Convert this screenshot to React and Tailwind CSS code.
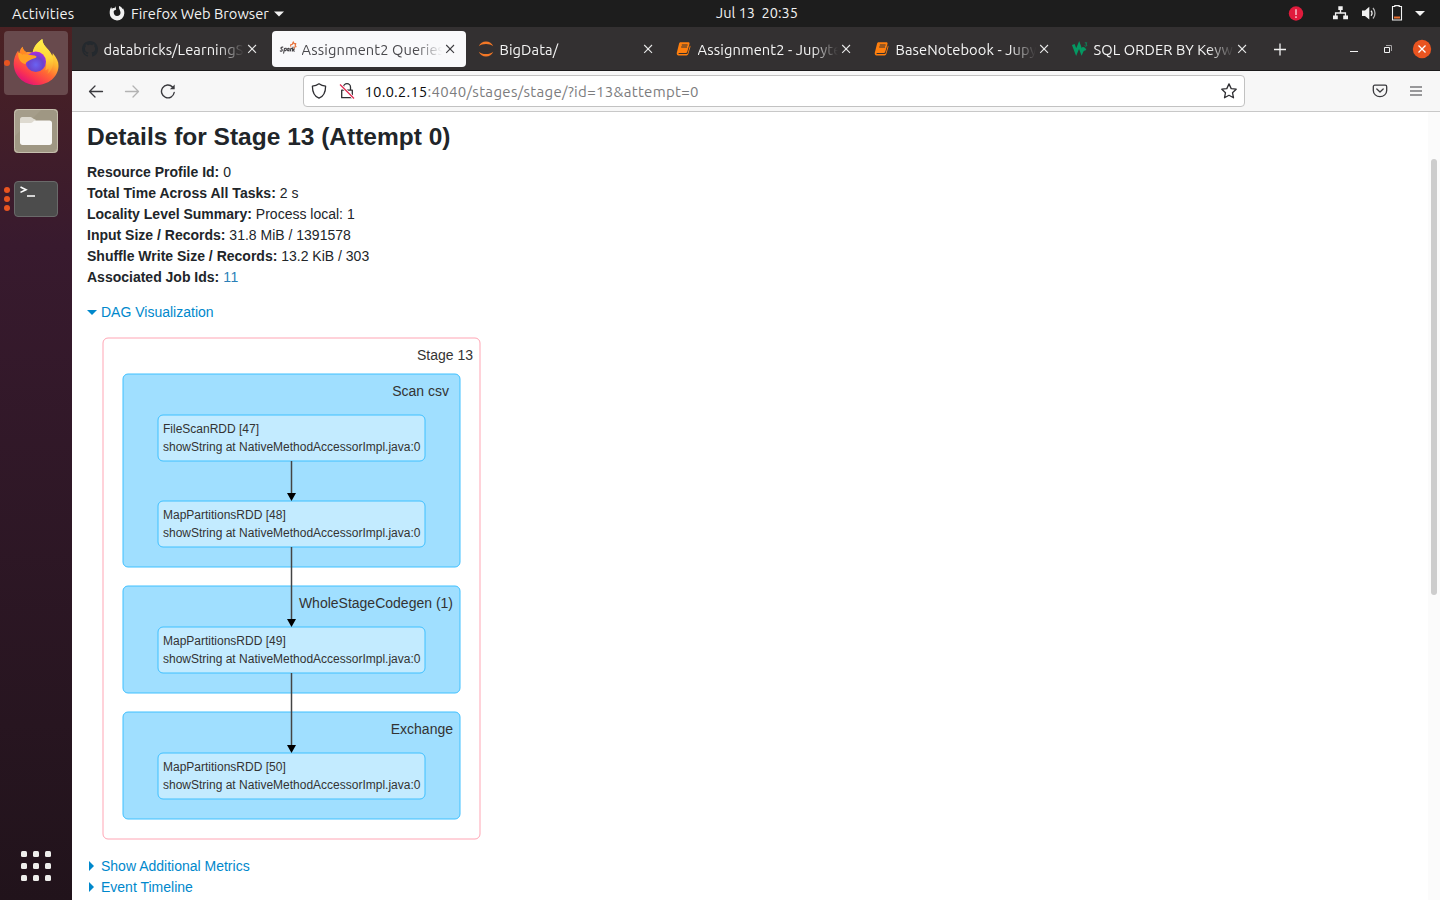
import React from "react";

const UI = "font-['Ubuntu','Noto_Sans',sans-serif]";

function GithubIcon() {
  return (
    <svg width="16" height="16" viewBox="0 0 16 16" fill="#24292e">
      <path d="M8 0C3.58 0 0 3.58 0 8c0 3.54 2.29 6.53 5.47 7.59.4.07.55-.17.55-.38 0-.19-.01-.82-.01-1.49-2.01.37-2.53-.49-2.69-.94-.09-.23-.48-.94-.82-1.13-.28-.15-.68-.52-.01-.53.63-.01 1.08.58 1.23.82.72 1.21 1.87.87 2.33.66.07-.52.28-.87.51-1.07-1.78-.2-3.64-.89-3.64-3.95 0-.87.31-1.59.82-2.15-.08-.2-.36-1.02.08-2.12 0 0 .67-.21 2.2.82.64-.18 1.32-.27 2-.27s1.36.09 2 .27c1.53-1.04 2.2-.82 2.2-.82.44 1.1.16 1.92.08 2.12.51.56.82 1.27.82 2.15 0 3.07-1.87 3.75-3.65 3.95.29.25.54.73.54 1.48 0 1.07-.01 1.93-.01 2.2 0 .21.15.46.55.38A8.01 8.01 0 0 0 16 8c0-4.42-3.58-8-8-8z" />
    </svg>
  );
}

function SparkIcon() {
  return (
    <svg width="16" height="16" viewBox="0 0 16 16" className="overflow-visible">
      <g fill="none" stroke="#454347" strokeWidth="1.200" strokeLinecap="round" transform="translate(.3 -.4) scale(.9 1)">
        <path d="M2.800 6.600C1.300 6.300.4 7 .8 7.800c.4.700 1.600.9 1.400 1.900C2 10.600.8 10.800 0 10.300" />
        <path d="M3.700 12.500 4.600 8c1.500-.8 2.500-.2 2.100 1-.3 1-1.300 1.400-2.300 1" />
        <path d="M9.900 8c-1.500-.5-2.300.3-2.300 1.300 0 1.200 1.500 1 1.900.2L9.900 8l-.3 2.300" />
        <path d="m11.200 10.400.5-2.600M11.600 8.600c.4-.6.900-.8 1.400-.7M13.300 10.500l.8-4M15.700 8.300l-1.700 1 1.500 1.300" />
      </g>
      <path d="m10.600 5.600.2-2.100 1.500-.2 1-2.400.8 1.800 1.700-.2-.6 1.700.8 1.500-1.600.3-.1 1.500" fill="none" stroke="#e8743f" strokeWidth="1.200" strokeLinejoin="round" />
    </svg>
  );
}

function JupyterIcon() {
  return (
    <svg width="16" height="16" viewBox="0 0 16 16" fill="#f37726">
      <path d="M.8 5.300C2 2.300 4.700.6 8 .6s6 1.700 7.200 4.700C13.400 3.800 10.900 3 8 3S2.600 3.800.8 5.300z" />
      <path d="M.8 10.700C2 13.700 4.700 15.400 8 15.400s6-1.700 7.200-4.700C13.400 12.200 10.900 13 8 13s-5.400-.8-7.200-2.300z" />
    </svg>
  );
}

function NotebookIcon() {
  return (
    <svg width="16" height="16" viewBox="0 0 16 16">
      <path d="M4.700 1.700h7.600c1 0 1.500.7 1.200 1.700l-2.300 8.200c-.2.700-.7 1-1.400 1H3c-.7 0-.9.900 0 .9h7.600c.6 0 .9-.2 1.100-.8l2.200-7.800c.5.300.7.800.5 1.500l-2.100 7.200c-.3.900-.9 1.300-1.700 1.300H2.500C1.200 14.900.4 13.600.8 12.300L3.100 3c.3-.9.8-1.300 1.600-1.300z" fill="#ff7f0e" transform="translate(0 -.5)" />
      <path d="M5.800 4h5.800M5.200 6H11" stroke="#333031" strokeWidth="1" />
    </svg>
  );
}

function W3Icon() {
  return (
    <svg width="16" height="16" viewBox="0 0 16 16" fill="none" stroke="#059862">
      <path d="M1.300 3.500 4.200 11l2.900-7L9.700 11l1.600-3.500c.8 0 1.300.8 1.700 2" strokeWidth="2.900" />
      <path d="M12.800 1.800h2l-1 1.400c1.200 0 1.500 1.900 0 2-.6 0-.9-.3-1.100-.6" strokeWidth=".8" />
    </svg>
  );
}

function CloseX({ color }) {
  return (
    <svg width="16" height="16" viewBox="0 0 16 16" className="shrink-0" fill="none" stroke={color} strokeWidth="1.100">
      <path d="m4.200 4 7.800 7.800M12 4l-7.800 7.800" />
    </svg>
  );
}

const tabs = [
  { title: "databricks/LearningSparkV2", Icon: GithubIcon },
  { title: "Assignment2 Queries - Details", Icon: SparkIcon, active: true },
  { title: "BigData/", Icon: JupyterIcon },
  { title: "Assignment2 - Jupyter Notebook", Icon: NotebookIcon },
  { title: "BaseNotebook - Jupyter", Icon: NotebookIcon },
  { title: "SQL ORDER BY Keyword", Icon: W3Icon },
];

function Tab({ title, Icon, active }) {
  return (
    <div className="flex w-[198px] shrink-0 px-0.5 pt-1 pb-[3px]">
      <div className={`flex w-full items-center rounded px-2 ${active ? "bg-[#f9f9fb] text-[#4a494d]" : "text-[#f5f5f5]"}`}>
        <span className="mr-[5.500px] size-4 shrink-0"><Icon /></span>
        <span className="min-w-0 flex-1 overflow-hidden pt-px text-[14.667px] leading-5 tracking-[0.1px] whitespace-nowrap [mask-image:linear-gradient(to_left,transparent,black_26px)]">{title}</span>
        <CloseX color={active ? "#3c3b3f" : "#e8e8e8"} />
      </div>
    </div>
  );
}

function TopBar() {
  return (
    <header className="grid h-[27px] shrink-0 grid-cols-[1fr_auto_1fr] items-center bg-[#1d1d1d] text-[14.667px] text-[#f2f2f2]">
      <div className="flex items-center pl-3">
        <span className="w-[97px] tracking-[0.23px]">Activities</span>
        <svg width="16" height="16" viewBox="0 0 16 16" className="mr-1.5 mb-px shrink-0">
          <path d="M8 15.500A7.300 7.300 0 0 1 .7 8.200C.6 5.500 1.300 3.300 2.200 2l.6 1.700c.9-.7 1.900-.7 2.600-.5L6.400 1.200l.6 2.500c.5 1-.4 1.300-1.200 1.500-.9.400-1.200 1-1.100 2C4.800 9.400 6.100 11 8 11c2.200 0 3.600-1.500 3.500-3.500C11.400 5 9.600 4.400 10 1c2 .6 3 1.800 3.500 3l.7-.5c1 2 1.200 3.300 1.100 5A7.300 7.300 0 0 1 8 15.500z" fill="#f2f2f2" />
        </svg>
        <span className="w-[143px] shrink-0 whitespace-nowrap">Firefox Web Browser</span>
        <svg width="10" height="6" viewBox="0 0 10 6"><path d="M0 .5h10L5 5.500z" fill="#f2f2f2" /></svg>
      </div>
      <div className="pl-[74px] text-[14.500px] leading-[18px] whitespace-pre pb-px">Jul 13  20:35</div>
      <div className="flex items-center justify-end pr-[15px]">
        <svg width="16" height="16" viewBox="0 0 16 16" className="mr-[29px]">
          <circle cx="8" cy="7.500" r="7.200" fill="#e01b3c" />
          <path d="M8 3.200V9M8 10.300V12" stroke="#f6c3cb" strokeWidth="1.500" />
        </svg>
        <svg width="16" height="16" viewBox="0 0 16 16" className="mr-3" fill="#f2f2f2">
          <path d="M5.300.3h4.400v3.800H8.200v2.200h4.900v3.200h1.900v3.800h-4.800V9.500h1.600V7.700H3.200v1.800h1.600v3.800H0V9.500h1.900V6.300h4.900V4.100H5.300z" />
        </svg>
        <svg width="16" height="16" viewBox="0 0 16 16" className="mr-3">
          <path d="M1 4.500h3L8.300.8v12.700L4 10H1z" fill="#f2f2f2" />
          <path d="M10 4.700a3.500 3.500 0 0 1 0 5" fill="none" stroke="#f2f2f2" strokeWidth="1.300" />
          <path d="M12 2a8 8 0 0 1 0 10.500" fill="none" stroke="#b5b5b5" strokeWidth="1.300" />
        </svg>
        <svg width="16" height="16" viewBox="0 0 16 16" className="mr-[10px] overflow-visible">
          <path d="M3.500.5h2.300v-.9h4.400v.9h2.300v13.500h-9z" fill="none" stroke="#f2f2f2" strokeWidth="1.100" />
          <path d="M5 10.500h6v2H5z" fill="#e96f2e" />
        </svg>
        <svg width="10" height="6" viewBox="0 0 10 6"><path d="M0 0h10L5 5z" fill="#f2f2f2" /></svg>
      </div>
    </header>
  );
}

function FirefoxLogo() {
  return (
    <svg width="48" height="48" viewBox="0 0 48 48">
      <defs>
        <linearGradient id="body" x1=".85" y1=".15" x2=".3" y2="1">
          <stop offset="0" stopColor="#fff04a" />
          <stop offset=".3" stopColor="#ffb62f" />
          <stop offset=".55" stopColor="#ff6a33" />
          <stop offset=".8" stopColor="#fb3550" />
          <stop offset="1" stopColor="#e0117a" />
        </linearGradient>
        <radialGradient id="globe" cx=".5" cy=".65" r=".65">
          <stop offset="0" stopColor="#6a63f2" />
          <stop offset=".55" stopColor="#6b44cc" />
          <stop offset="1" stopColor="#b02be0" />
        </radialGradient>
        <linearGradient id="flame" x1=".5" y1="0" x2=".5" y2="1">
          <stop offset="0" stopColor="#fff04a" />
          <stop offset=".55" stopColor="#ffd53a" />
          <stop offset="1" stopColor="#ff8f2e" />
        </linearGradient>
      </defs>
      <path d="M24 46C11.500 46 1.700 36.500 1.700 24.500c0-5 1.800-9.500 4.500-13 .1 1.300.5 2.300 1 3.200.3-2.700 1.500-5.500 3.500-7 .2 2.500 1.500 4.500 3.500 5.500 2-.5 4.500-.3 6.500.5 1-5.500 4-10 9.600-13.700.2 4 2 6.500 4.500 9.500 2 2 4 4.500 5 7.500 1-.8 1-1.500.9-3 4 5 6 8.500 5.800 13C46.300 38 36.500 46 24 46z" fill="url(#body)" />
      <path d="M20.700 13.200c1-5.200 4-9.500 9.600-13.200.2 4 2 6.500 4.500 9 4.500 4.500 7 9 6.500 15-.4 4.500-2.500 8.500-6 11 1.500-2.500 1.500-4 1-5.500-1 1-2 1.500-3 1.800 2-5 .8-11-3.300-14.500-2.500-2.200-5.500-3-9.300-3.600z" fill="url(#flame)" />
      <circle cx="23.800" cy="22.700" r="10.200" fill="url(#globe)" />
      <path d="M6.200 13.500c4 1.700 8 1.900 12.500 2.500 3 .3 5.700.7 6 2-1.500 1.700-4 1.700-6 2.700-2.300 1.300-4.500 1.800-5.200 4.300C9.500 25 5.500 20 6.200 13.500z" fill="#ffa024" />
      <path d="M10.700 7.700c.2 2.500 1.500 4.500 4 5.600-1.500 1-3 1.700-4.500 2.700-1.500-2.500-1.200-6 .5-8.300z" fill="#ff8a22" />
    </svg>
  );
}

function Dock() {
  return (
    <aside className="flex w-[72px] shrink-0 flex-col bg-linear-to-b from-[#4b2123] from-0% via-[#381a2e] via-25% to-[#21131b] to-100%">
      <div className="flex h-[68px] items-end pl-1">
        <div className="relative flex h-16 w-16 items-center justify-center rounded bg-[#684a4d]">
          <FirefoxLogo />
          <span className="absolute top-[29px] left-0 size-1.5 rounded-full bg-[#e95420]" />
        </div>
      </div>
      <div className="flex h-[72px] items-center justify-center">
        <svg width="48" height="48" viewBox="0 0 48 48">
          <rect x="2" y="2" width="44" height="44" rx="4" fill="#a59d8a" />
          <path d="M2 30 30 2h12a4 4 0 0 1 4 4v34L40 46H6a4 4 0 0 1-4-4z" fill="#989079" opacity=".45" />
          <rect x="2.500" y="2.500" width="43" height="43" rx="4" fill="none" stroke="#c6bfae" />
          <path d="M8 12.500c0-1.500.8-2.500 2.300-2.500h8.200c2 0 2.500 2.500 5 2.500V20H8z" fill="#dedad0" />
          <path d="M8 16h11c2 0 2-2.500 4-2.500h14.500c1.500 0 2.500 1 2.500 2.500v19.500c0 1.500-1 2.500-2.500 2.500h-27C9 38 8 37 8 35.500z" fill="#f9f8f6" />
        </svg>
      </div>
      <div className="flex h-[64px] items-center">
        <span className="flex w-3 flex-col items-center gap-[3px] pl-0.5">
          <span className="size-1.5 rounded-full bg-[#e95420]" />
          <span className="size-1.5 rounded-full bg-[#e95420]" />
          <span className="size-1.5 rounded-full bg-[#e95420]" />
        </span>
        <div className="ml-0.5 flex h-9 w-11 items-start rounded border border-[#6a6a6a] bg-[#4c4c4c]">
          <svg width="24" height="20" viewBox="0 0 24 20" fill="none" stroke="#fff" strokeWidth="1.600">
            <path d="m5.500 5 5.500 2.700-5.500 2.700M12 14h8" />
          </svg>
        </div>
      </div>
      <div className="mt-auto mb-[19px] ml-[21px] grid w-[30px] grid-cols-3 gap-1.5">
        {Array.from({ length: 9 }, (_, i) => (
          <span key={i} className="size-1.5 rounded-[1.500px] bg-[#eeeeec]" />
        ))}
      </div>
    </aside>
  );
}

function TabStrip() {
  return (
    <div className="flex h-11 shrink-0 items-stretch border-b border-[#1b1a1b] bg-[#333031]">
      {tabs.map((t) => <Tab key={t.title} {...t} />)}
      <svg width="16" height="44" viewBox="0 0 16 44" className="ml-3" stroke="#f2f2f2" strokeWidth="1.300">
        <path d="M2 22.500h12M8 16.500v12" />
      </svg>
      <svg width="90" height="44" viewBox="0 0 90 44" className="ml-auto">
        <path d="M0 24.500h8" stroke="#f2f2f2" />
        <path d="M34.500 20.500h5v5h-5z" fill="none" stroke="#f2f2f2" />
        <path d="M36 18.500h5.500V24" fill="none" stroke="#a5a3a4" />
        <circle cx="72" cy="22" r="9.200" fill="#e95420" />
        <path d="m68.500 18.500 7 7M75.500 18.500l-7 7" stroke="#fff" strokeWidth="1.300" />
      </svg>
    </div>
  );
}

function Toolbar() {
  return (
    <div className="flex h-[41px] shrink-0 items-center border-b border-[#c8c8c8] bg-[#f7f7f7]">
      <div className="flex gap-5 pl-4">
        <svg width="16" height="16" viewBox="0 0 16 16" fill="none" stroke="#3a3a3e" strokeWidth="1.300" strokeLinecap="round" strokeLinejoin="round"><path d="M14.500 8.500h-13M7 3 1.500 8.500 7 14" /></svg>
        <svg width="16" height="16" viewBox="0 0 16 16" fill="none" stroke="#b3b3b3" strokeWidth="1.300" strokeLinecap="round" strokeLinejoin="round"><path d="M1.500 8.500h13M9 3l5.500 5.500L9 14" /></svg>
        <svg width="16" height="16" viewBox="0 0 16 16" fill="none" stroke="#3a3a3e" strokeWidth="1.400" strokeLinecap="round"><path d="M14.200 9.500A6.400 6.400 0 1 1 12.500 4" /><path d="M14.700 1.500v4.800H9.900z" fill="#3a3a3e" stroke="none" /></svg>
      </div>
      <div className="ml-[127px] flex h-8 w-[942px] items-center rounded border border-[#c2c2c2] bg-white px-[7px]">
        <svg width="16" height="16" viewBox="0 0 16 16" fill="none" stroke="#2e2e32" strokeWidth="1.300" strokeLinejoin="round"><path d="M8 .8c2 1.500 4 2.200 6.600 2.400 0 5.800-1.800 10-6.600 12C3.200 13.200 1.400 9 1.400 3.200 4 3 6 2.300 8 .8z" /></svg>
        <svg width="16" height="16" viewBox="0 0 16 16" className="ml-3" fill="none"><path d="M4.500 7V4.200a3.500 3.500 0 0 1 7 0V7M2.700 7.200h10.600v7.500H2.700z" stroke="#2e2e32" strokeWidth="1.300" strokeLinejoin="round" /><path d="m1 1.500 14 14" stroke="#fff" strokeWidth="3" /><path d="m1 1.500 14 14" stroke="#e22850" strokeWidth="1.300" /></svg>
        <span className="ml-[9.500px] pt-0.5 text-[15px] tracking-[0.32px] text-[#7c7c7e]"><span className="tracking-[0.12px] text-[#0c0c0d]">10.0.2.15</span>:4040/stages/stage/?id=13&amp;attempt=0</span>
        <svg width="16" height="16" viewBox="0 0 16 16" className="ml-auto" fill="none" stroke="#2e2e32" strokeWidth="1.300" strokeLinejoin="round"><path d="m8 .9 2.200 4.700 5 .6-3.700 3.500 1 5.100L8 12.300l-4.500 2.500 1-5.100L.8 6.200l5-.6z" /></svg>
      </div>
      <svg width="16" height="16" viewBox="0 0 16 16" className="ml-auto" fill="none" stroke="#3a3a3e" strokeWidth="1.300" strokeLinecap="round" strokeLinejoin="round"><path d="M2.800 2.200h10.400c.9 0 1.500.6 1.500 1.500V7.500a6.700 6.200 0 0 1-13.400 0V3.700c0-.9.600-1.500 1.500-1.500zM4.800 6l3.200 3 3.200-3" /></svg>
      <svg width="16" height="16" viewBox="0 0 16 16" className="mr-4 ml-5" stroke="#3a3a3e" strokeWidth="1.200"><path d="M2 4h12M2 8h12M2 12h12" /></svg>
    </div>
  );
}

const clusters = [
  { y: 374, h: 193, label: "Scan csv", right: 449 },
  { y: 586, h: 107, label: "WholeStageCodegen (1)", right: 453 },
  { y: 712, h: 107, label: "Exchange", right: 453 },
];
const nodes = [
  { y: 415, name: "FileScanRDD [47]" },
  { y: 501, name: "MapPartitionsRDD [48]" },
  { y: 627, name: "MapPartitionsRDD [49]" },
  { y: 753, name: "MapPartitionsRDD [50]" },
];

function Dag() {
  return (
    <svg width="400" height="533" viewBox="87 323 400 533" className="block">
      <rect x="103" y="338" width="377" height="501" rx="5" fill="#fff" stroke="#ffa5b4" />
      <text x="473" y="360" textAnchor="end" fontSize="14" fill="#333">Stage 13</text>
      {clusters.map((c) => (
        <g key={c.label}>
          <rect x="123" y={c.y} width="337" height={c.h} rx="5" fill="#a0dfff" stroke="#3ec0ff" />
          <text x={c.right} y={c.y + 22} textAnchor="end" fontSize="14" fill="#333">{c.label}</text>
        </g>
      ))}
      {nodes.map((n) => (
        <g key={n.name} fontSize="12" fill="#333">
          <rect x="158" y={n.y} width="267" height="46" rx="5" fill="#c3ebff" stroke="#3ec0ff" />
          <text x="163" y={n.y + 18}>{n.name}</text>
          <text x="163" y={n.y + 36}>showString at NativeMethodAccessorImpl.java:0</text>
        </g>
      ))}
      {nodes.slice(1).map((n, i) => (
        <g key={n.name}>
          <path d={`M291.500 ${nodes[i].y + 46}V${n.y - 4}`} stroke="#444" strokeWidth="1.500" />
          <path d={`M287 ${n.y - 8}h9l-4.500 8z`} fill="#000" />
        </g>
      ))}
    </svg>
  );
}

const summary = [
  ["Resource Profile Id:", "0"],
  ["Total Time Across All Tasks:", "2 s", "tracking-[0.03px]"],
  ["Locality Level Summary:", "Process local: 1"],
  ["Input Size / Records:", "31.8 MiB / 1391578"],
  ["Shuffle Write Size / Records:", "13.2 KiB / 303"],
];

function Toggle({ open, children }) {
  return (
    <div className="flex h-[21px] items-center text-[#0088cc]">
      <svg width="14" height="12" viewBox="0 0 14 12" fill="currentColor">
        {open ? <path d="M0 3h10L5 8z" /> : <path d="M2 0v10l5-5z" />}
      </svg>
      <a>{children}</a>
    </div>
  );
}

function Page() {
  return (
    <main className="flex min-h-0 flex-1 justify-between overflow-hidden bg-white font-['Liberation_Sans',Arial,sans-serif] text-sm leading-[21px] text-[#212529]">
      <div className="pl-[15px]">
        <h3 className="mt-2.5 mb-2 h-8 text-[24.500px] leading-[29px] font-bold">Details for Stage 13 (Attempt 0)</h3>
        <ul>
          {summary.map(([k, v, track]) => <li key={k} className={track}><strong>{k}</strong> {v}</li>)}
          <li><strong>Associated Job Ids:</strong> <a className="tracking-[0.5px] text-[#2a7fb8]">11</a></li>
        </ul>
        <div className="mt-3.5"><Toggle open>DAG Visualization</Toggle></div>
        <Dag />
        <Toggle>Show Additional Metrics</Toggle>
        <Toggle>Event Timeline</Toggle>
      </div>
      <div className="w-3 bg-[#fbfbfb] pt-[47px] pl-[3px]">
        <div className="h-[436px] w-1.5 rounded-full bg-[#cdcdcd]" />
      </div>
    </main>
  );
}

export default function App() {
  return (
    <div className={`flex h-[900px] w-[1440px] flex-col overflow-hidden ${UI}`}>
      <TopBar />
      <div className="flex min-h-0 flex-1">
        <Dock />
        <div className="flex min-w-0 flex-1 flex-col">
          <TabStrip />
          <Toolbar />
          <Page />
        </div>
      </div>
    </div>
  );
}
